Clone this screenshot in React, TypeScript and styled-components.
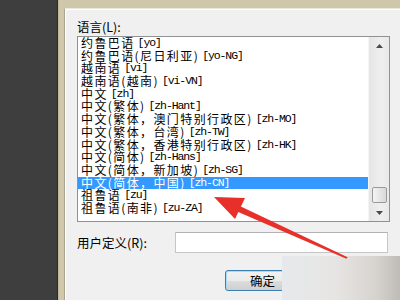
import React, { FunctionComponent } from "react";
import styled, { createGlobalStyle } from "styled-components";

const GlobalStyle = createGlobalStyle`
  html, body {
    margin: 0;
    padding: 0;
    background: #3e3e3e;
  }
`;

const cjk = `"Noto Sans CJK SC", "Noto Sans", sans-serif`;
const mono = `"Liberation Mono", "DejaVu Sans Mono", monospace`;

type Language = {
  name: string;
  code: string;
};

const languages: Language[] = [
  { name: "约鲁巴语", code: "[yo]" },
  { name: "约鲁巴语(尼日利亚)", code: "[yo-NG]" },
  { name: "越南语", code: "[vi]" },
  { name: "越南语(越南)", code: "[vi-VN]" },
  { name: "中文", code: "[zh]" },
  { name: "中文(繁体)", code: "[zh-Hant]" },
  { name: "中文(繁体，澳门特别行政区)", code: "[zh-MO]" },
  { name: "中文(繁体，台湾)", code: "[zh-TW]" },
  { name: "中文(繁体，香港特别行政区)", code: "[zh-HK]" },
  { name: "中文(简体)", code: "[zh-Hans]" },
  { name: "中文(简体，新加坡)", code: "[zh-SG]" },
  { name: "中文(简体，中国)", code: "[zh-CN]" },
  { name: "祖鲁语", code: "[zu]" },
  { name: "祖鲁语(南非)", code: "[zu-ZA]" },
];

const SELECTED = "[zh-CN]";

const Page = styled.div`
  position: relative;
  display: flex;
  width: 400px;
  height: 300px;
  overflow: hidden;
  background: #3e3e3e;
`;

const DarkSide = styled.div`
  width: 57px;
  flex-shrink: 0;
`;

// beige window frame around the dialog
const Frame = styled.div`
  flex: 1;
  display: flex;
  padding: 8px 0 0 6px;
  background: linear-gradient(90deg, #bdb595 0px, #d3cbae 2px, #cfc7a9 5px);
  border-left: 1px solid #2b2b2b;
`;

const Dialog = styled.div`
  flex: 1;
  display: flex;
  flex-direction: column;
  padding: 11px 0 0 12px;
  background: #f0f0f0;
  border-top: 1px solid #e9e6dc;
  border-left: 1px solid #a9a490;
  box-shadow: inset 1px 1px 0 #ffffff;
  font-family: ${cjk};
  color: #000;
`;

const Label = styled.div`
  height: 14px;
  line-height: 14px;
  font-size: 12.5px;
  margin-bottom: 2px;
`;

const ListBox = styled.div`
  display: flex;
  width: 313px;
  height: 186px;
  box-sizing: border-box;
  border: 1px solid #8f9294;
  background: #fff;
  overflow: hidden;
`;

const Items = styled.div`
  flex: 1;
  display: flex;
  flex-direction: column;
  overflow: hidden;
`;

const Row = styled.div<{ selected: boolean }>`
  display: flex;
  align-items: center;
  flex-shrink: 0;
  height: 12.7px;
  padding-left: 3px;
  white-space: nowrap;
  background: ${({ selected }) => (selected ? "#3399ff" : "transparent")};
  color: ${({ selected }) => (selected ? "#fff" : "#000")};
`;

const Name = styled.span`
  font-family: ${cjk};
  font-size: 12px;
  letter-spacing: 1.4px;
  line-height: 12.7px;
`;

const Code = styled.span`
  font-family: ${mono};
  font-size: 11.5px;
  letter-spacing: -1.1px;
  line-height: 12.7px;
  margin-left: 3px;
`;

const ScrollBar = styled.div`
  width: 20px;
  flex-shrink: 0;
  display: flex;
  flex-direction: column;
  background: linear-gradient(90deg, #e6e6e6, #efefef 60%, #e9e9e9);
  border-left: 1px solid #f4f4f4;
`;

const ArrowButton = styled.div`
  height: 17px;
  display: flex;
  align-items: center;
  justify-content: center;
`;

const Track = styled.div`
  flex: 1;
  display: flex;
  flex-direction: column;
  justify-content: flex-end;
  align-items: center;
`;

const Thumb = styled.div`
  width: 15px;
  height: 16px;
  box-sizing: border-box;
  margin-bottom: 1px;
  border: 1px solid #9a9a9a;
  border-radius: 2px;
  background: linear-gradient(90deg, #f4f4f4, #e6e6e6 50%, #d8d8d8);
`;

const UserRow = styled.div`
  display: flex;
  align-items: center;
  margin-top: 10px;
  height: 21px;
`;

const UserLabel = styled.div`
  width: 98px;
  font-size: 12.5px;
`;

const Input = styled.div`
  width: 213px;
  height: 21px;
  box-sizing: border-box;
  border: 1px solid #c4c6c8;
  border-top-color: #b0b2b5;
  background: #fff;
`;

const ButtonRow = styled.div`
  display: flex;
  justify-content: flex-end;
  gap: 8px;
  width: 313px;
  box-sizing: border-box;
  padding-right: 7px;
  margin-top: 17px;
`;

const Button = styled.div<{ primary?: boolean }>`
  width: 75px;
  height: 21px;
  box-sizing: border-box;
  display: flex;
  align-items: center;
  justify-content: center;
  font-size: 12.5px;
  border: 1px solid ${({ primary }) => (primary ? "#3c7fb1" : "#707070")};
  border-radius: 3px;
  background: linear-gradient(#f2f2f2, #ebebeb 50%, #dddddd 51%, #cfcfcf);
  box-shadow: ${({ primary }) =>
    primary ? "inset 0 0 0 1px #a8dcf6" : "inset 0 0 0 1px #fcfcfc"};
`;

// watermark patch sitting over the bottom right corner
const Patch = styled.div`
  position: absolute;
  left: 282px;
  top: 256px;
  right: 0;
  bottom: 0;
  background: linear-gradient(90deg, #e6e9ec 0%, #e7e5e3 45%, #d6d3cf 80%, #bfbcb7 100%);
`;

const ArrowLayer = styled.svg`
  position: absolute;
  left: 0;
  top: 0;
  pointer-events: none;
`;

const UpGlyph = () => (
  <svg width="7" height="4" viewBox="0 0 7 4">
    <path d="M0 4 L3.5 0 L7 4 Z" fill="#4a4a4a" />
  </svg>
);

const DownGlyph = () => (
  <svg width="7" height="4" viewBox="0 0 7 4">
    <path d="M0 0 L3.5 4 L7 0 Z" fill="#4a4a4a" />
  </svg>
);

const App: FunctionComponent = () => (
  <Page>
    <GlobalStyle />
    <DarkSide />
    <Frame>
      <Dialog>
        <Label>语言(L):</Label>
        <ListBox>
          <Items>
            {languages.map((lang) => (
              <Row key={lang.code} selected={lang.code === SELECTED}>
                <Name>{lang.name}</Name>
                <Code>{lang.code}</Code>
              </Row>
            ))}
          </Items>
          <ScrollBar>
            <ArrowButton>
              <UpGlyph />
            </ArrowButton>
            <Track>
              <Thumb />
            </Track>
            <ArrowButton>
              <DownGlyph />
            </ArrowButton>
          </ScrollBar>
        </ListBox>
        <UserRow>
          <UserLabel>用户定义(R):</UserLabel>
          <Input />
        </UserRow>
        <ButtonRow>
          <Button primary>确定</Button>
          <Button>取消</Button>
        </ButtonRow>
      </Dialog>
    </Frame>
    <Patch />
    <ArrowLayer width="400" height="300" viewBox="0 0 400 300">
      <polygon points="214,197 245,198 235,219" fill="#e8302b" />
      <polygon
        points="240.3,206.3 347.6,257.3 346.4,258.7 237.7,211.7"
        fill="#e8302b"
      />
    </ArrowLayer>
  </Page>
);

export default App;
